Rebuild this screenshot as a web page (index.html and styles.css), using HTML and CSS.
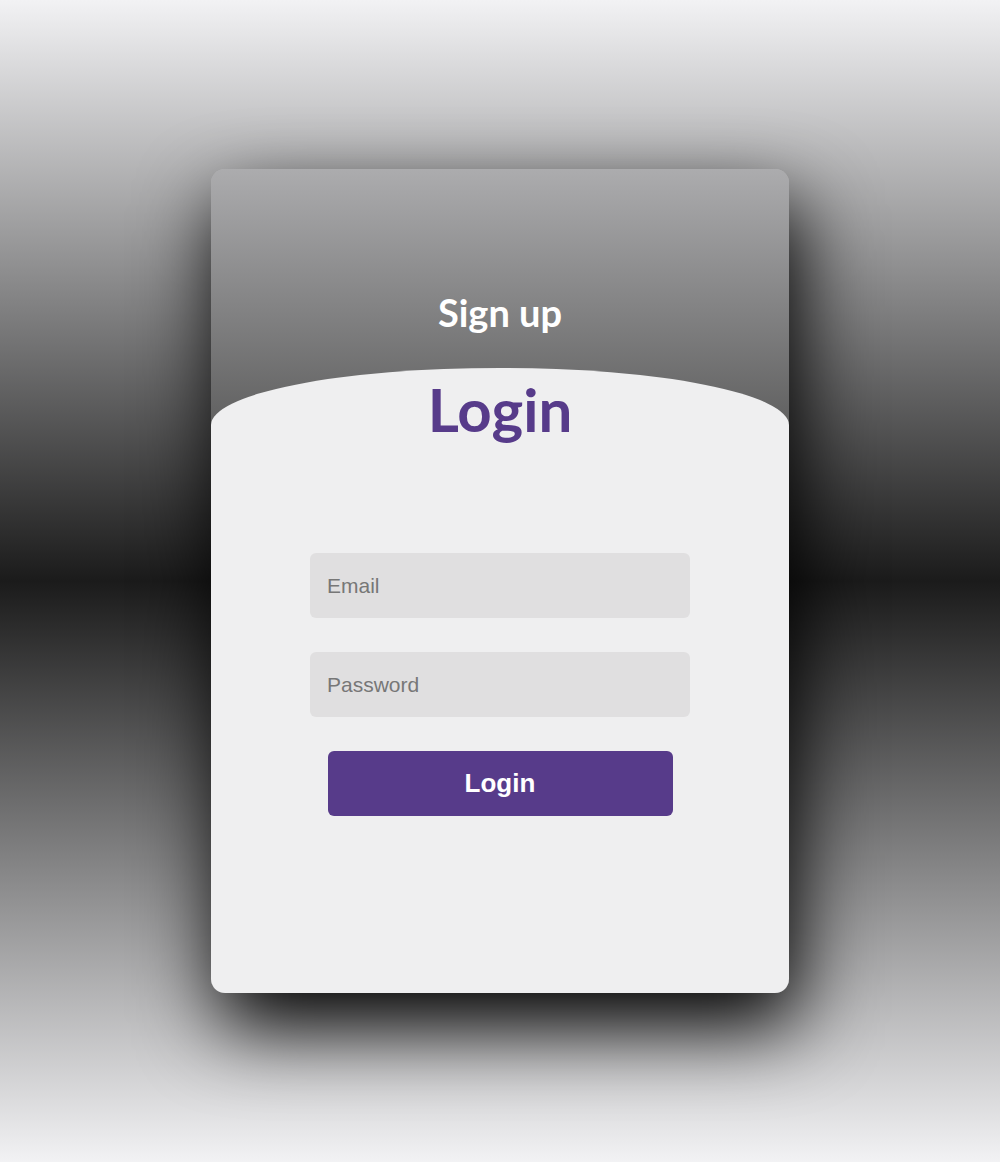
FILE: index.html
```html
<!DOCTYPE html>
<html lang="en">

<head>
    <meta charset="UTF-8">
    <meta name="viewport" content="width=device-width, initial-scale=1.0">
    <title>Login</title>
    <link rel="stylesheet" href="styles.css">
</head>

<body>
    <div class="main">
        <div class="signup">
            <label class="signup-label">Sign up</label>
        </div>
        <form class="login">
            <label class="login-label">Login</label>
            <input type="email" name="email" placeholder="Email" required>
            <input type="password" name="pswd" placeholder="Password" required>
            <button type="submit">Login</button>
        </form>
    </div>
</body>

</html>
```

FILE: styles.css
```css
body {
    margin: 0;
    min-height: 100vh;
    display: flex;
    justify-content: center;
    align-items: center;
    font-family: "Liberation Sans", Arial, sans-serif;
    background: linear-gradient(to bottom, #f2f2f4 0%, #1b1b1b 50%, #f2f2f4 100%);
}

.main {
    width: 578px;
    height: 824px;
    display: flex;
    flex-direction: column;
    overflow: hidden;
    border-radius: 14px;
    background: linear-gradient(to bottom, #acacae 0%, #5c5c5c 270px);
    box-shadow: 8px 33px 80px #000;
}

.signup {
    height: 199px;
    box-sizing: border-box;
    padding-top: 124px;
    display: flex;
    justify-content: center;
}

.signup-label,
.login-label {
    font-family: Lato, "Noto Sans", sans-serif;
    font-weight: bold;
    line-height: 1;
}

.signup-label {
    font-size: 38px;
    color: #fff;
}

.login {
    flex: 1;
    display: flex;
    flex-direction: column;
    align-items: center;
    padding-top: 11px;
    background: #efeff0;
    border-radius: 50% 50% 0 0 / 57px 57px 0 0;
}

.login-label {
    font-size: 60px;
    color: #573b8a;
    margin-bottom: 114px;
}

.login input {
    width: 380px;
    height: 65px;
    box-sizing: border-box;
    padding: 0 17px;
    margin-bottom: 34px;
    border: none;
    outline: none;
    border-radius: 6px;
    background: #e0dfe0;
    font-family: "Liberation Sans", Arial, sans-serif;
    font-size: 21px;
    color: #333;
}

.login input::placeholder {
    color: #777;
}

.login button {
    width: 345px;
    height: 65px;
    border: none;
    border-radius: 6px;
    background: #573b8a;
    color: #fff;
    font-family: "Liberation Sans", Arial, sans-serif;
    font-size: 26px;
    font-weight: bold;
    cursor: pointer;
}
```
